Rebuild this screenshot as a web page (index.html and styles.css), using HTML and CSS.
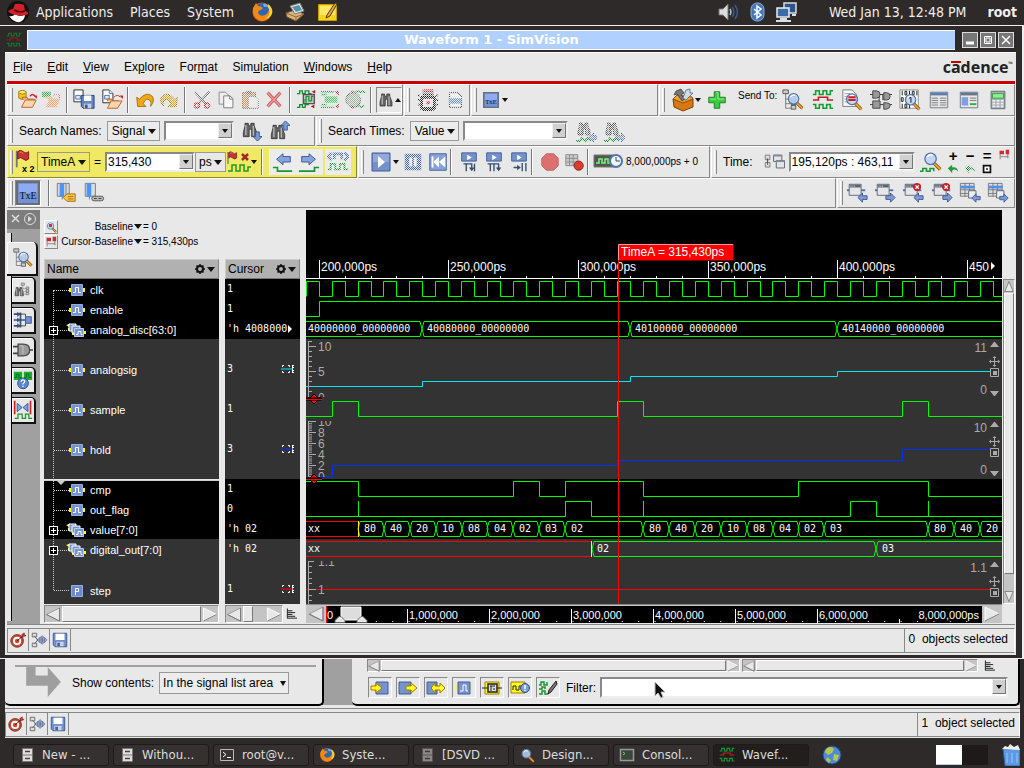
FILE: index.html
```html
<!DOCTYPE html>
<html lang="en">
<head>
<meta charset="utf-8">
<title>Waveform 1 - SimVision</title>
<link rel="stylesheet" href="styles.css">
</head>
<body>
<svg class="sprite" aria-hidden="true">
  <symbol id="open-db" viewBox="0 0 24 24"><path d="M3 3v7q4 3 8 0V3z" fill="#f5c518" stroke="#a57908"/><ellipse cx="7" cy="3.5" rx="4" ry="2" fill="#ffe979" stroke="#a57908"/><path d="M7 11V9h5l1 2h7v3" fill="#f7b27a" stroke="#b5612a"/><path d="M6 20l4-8h12l-4 8z" fill="#fcd5ae" stroke="#b5612a"/><path d="M15 8q3-4 6 0" fill="none" stroke="#c03030" stroke-width="1.4"/><path d="M19 7h4v4z" fill="#c03030"/></symbol>
  <symbol id="open-sig" viewBox="0 0 24 24"><path d="M2 3h10v6H2z" fill="#35b04a"/><path d="M7 11V8h6l1 2h6v3" fill="#f7b27a"/><path d="M6 20l4-9h12l-4 9z" fill="#f9a66a"/><path d="M15 7q3-3 6 0v3" fill="none" stroke="#c03030"/></symbol>
  <symbol id="save-doc" viewBox="0 0 24 24"><path d="M1 1h10v13H1z" fill="#fff" stroke="#222"/><path d="M3 7h5v4H3z" fill="#dbe8ff" stroke="#4c6fae"/><path d="M9 7h14v14H11l-2-2z" fill="#6385c6" stroke="#273f70"/><path d="M12 7h8v6h-8z" fill="#fff"/><path d="M12 16h8v5h-8z" fill="#c9cfdb"/><path d="M13 17h3v4h-3z" fill="#405b91"/></symbol>
  <symbol id="open-doc" viewBox="0 0 24 24"><path d="M2 1h7l4 4v10H2z" fill="#fff" stroke="#222"/><path d="M9 1v4h4M4 7h5v4H4z" fill="#dbe8ff" stroke="#4c6fae"/><path d="M7 13v-2h5l1 2h6v3" fill="#f7b27a" stroke="#b5612a"/><path d="M7 21l4-8h12l-5 8z" fill="#fcd5ae" stroke="#b5612a"/><path d="M14 9q4-4 7 0" fill="none" stroke="#c03030"/><path d="M20 7h4v4z" fill="#c03030"/></symbol>
  <symbol id="undo" viewBox="0 0 24 24"><path d="M3 9l1 10h9l-3-3q3-7 7-4 3 3 1 7 5-6 2-11-6-6-14 3z" fill="#f0a818" stroke="#a56b05"/></symbol>
  <symbol id="redo" viewBox="0 0 24 24"><path d="M21 9l-1 10h-9l3-3q-3-7-7-4-3 3-1 7-5-6-2-11 6-6 14 3z" fill="#f0a818" stroke="#a56b05"/></symbol>
  <symbol id="cut" viewBox="0 0 24 24"><path d="M4 3l12 13M20 3L8 16" stroke="#777" stroke-width="2.500"/><circle cx="6.500" cy="18" r="2.500" fill="none" stroke="#d02c2c" stroke-width="2"/><circle cx="17.500" cy="18" r="2.500" fill="none" stroke="#d02c2c" stroke-width="2"/></symbol>
  <symbol id="copy" viewBox="0 0 24 24"><path d="M4.500 3.500h7l3 3v10h-10z" fill="#eee" stroke="#888"/><path d="M9.500 7.500h7l3 3v10h-10z" fill="#f7f7f7" stroke="#777"/><path d="M16 7.500v3.500h3.500" fill="none" stroke="#777"/></symbol>
  <symbol id="paste" viewBox="0 0 24 24"><path d="M4 4h14v17H4z" fill="#dc9b5c" stroke="#a05a20"/><path d="M8 2h6v4H8z" fill="#777"/><path d="M10 8h7l4 4v9H10z" fill="#eee" stroke="#777"/></symbol>
  <symbol id="delete" viewBox="0 0 24 24"><path d="M5 4l14 15M19 4L5 19" stroke="#b83232" stroke-width="3.500"/><path d="M5 4l14 15M19 4L5 19" stroke="#f27a7a" stroke-width="1.500"/></symbol>
  <symbol id="wave-chip" viewBox="0 0 24 24"><path d="M1 5h3V2h3v3h3V2h4v3h3M1 20h3v-3h3v3h3v-3h4" fill="none" stroke="#168c33" stroke-width="1.500"/><path d="M8 6h12v10H8z" fill="#c9c9c9" stroke="#555" stroke-width="1.500"/><path d="M9 12h2V8h3v5h3V8h2M9 14h3" fill="none" stroke="#1b9a35" stroke-width="1.500"/><path d="M17 3l4 2v-4zM16 19l4 2v-4z" fill="#c01818"/></symbol>
  <symbol id="wave-pass" viewBox="0 0 24 24"><path d="M1 3h14M1 20h14M1 6h6M1 17h6" stroke="#25a03c" stroke-width="1.500"/><path d="M5 8h14v7H5z" fill="#3bd55c"/><path d="M16 3l5 4-1-5M16 19l5-3-1 5" fill="#c02020"/></symbol>
  <symbol id="wave-out" viewBox="0 0 24 24"><ellipse cx="10" cy="12" rx="8" ry="8" fill="#9db79f" stroke="#555"/><path d="M8 1l3 2-3 2zM8 18l3 2-3 2z" fill="#c01818"/><path d="M12 4l3-2 3 2 3-2 2 2M13 20l3-2 3 2 3-2" fill="none" stroke="#168c33" stroke-width="1.500"/></symbol>
  <symbol id="bino" viewBox="0 0 24 24"><path d="M6 4h4v3h3V4h4v3l3 8v5h-6v-9h-3v9H4v-5l2-8z" fill="#666" stroke="#333"/><path d="M7 6v12M16 7v12" stroke="#bbb" stroke-width="1.500"/></symbol>
  <symbol id="gear-wave" viewBox="0 0 24 24"><path d="M6 1h12M6 3h12" stroke="#d02424" stroke-width="1.500"/><path d="M5 9h14v12H5z" fill="none" stroke="#222" stroke-width="3"/><path d="M1 7h2M1 12h2M1 17h2M21 7h2M21 12h2M21 17h2M6 6h12M6 23h12" stroke="#222" stroke-width="2"/><circle cx="12" cy="15" r="2" fill="#e22"/></symbol>
  <symbol id="doc" viewBox="0 0 24 24"><path d="M5 4h9l4 4v12H5z" fill="#fff" stroke="#333"/><path d="M4 10h14v6H4z" fill="#6c8fd0"/></symbol>
  <symbol id="txe" viewBox="0 0 24 24"><path d="M1 1h22v22H1z" fill="#6f92dd" stroke="#6d6d6d" stroke-width="2"/><path d="M3 3h18v9H3z" fill="#8faaf0"/><text x="12" y="18" text-anchor="middle" font-size="10" fill="#111" font-family="Liberation Serif, serif">TxE</text></symbol>
  <symbol id="toolbox" viewBox="0 0 24 24"><path d="M2 11l10 3 10-3v8l-10 4-9-4z" fill="#d77812" stroke="#7b3f06"/><path d="M2 11l4-4 15 2 1 2-10 4z" fill="#efa13c" stroke="#8b4b08"/><path d="M5 3l5-2 3 4-3 2 4 4-3 2-5-7-3 1z" fill="#777" stroke="#333" stroke-width=".7"/><path d="M12 10l3-8 4-1v4h3l-4 4-3 3z" fill="#cfdce8" stroke="#526a80" stroke-width=".8"/></symbol>
  <symbol id="plus" viewBox="0 0 24 24"><path d="M9 3h6v6h6v6h-6v6H9v-6H3V9h6z" fill="#39cc3f" stroke="#177b1d"/><path d="M11 4h2v7h7M4 11h7" fill="none" stroke="#9df09d"/></symbol>
  <symbol id="glass" viewBox="0 0 24 24"><path d="M14 14l8 8" stroke="#8f510b" stroke-width="4"/><path d="M14 14l8 8" stroke="#efa434" stroke-width="2"/><circle cx="11" cy="10" r="6.500" fill="#b9d2f4" fill-opacity=".85" stroke="#5473a8" stroke-width="1.500"/><path d="M7 8q3-4 6-2" fill="none" stroke="#fff" stroke-width="1.500"/></symbol>
  <symbol id="tree" viewBox="0 0 24 24"><path d="M4 4v17h7M4 11h6M4 16h6" fill="none" stroke="#777"/><path d="M1 1h6v4H1zM10 8h5v4h-5zM10 13h5v4h-5zM10 18h5v4h-5z" fill="#ccc" stroke="#555"/></symbol>
  <symbol id="tree-find" viewBox="0 0 24 24"><use href="#tree" width="24" height="24"/><use href="#glass" x="3" y="2" width="21" height="21"/></symbol>
  <symbol id="waves" viewBox="0 0 24 24"><path d="M1 6h3V2h4v4h4V2h4v4h4V2h3M1 17h3v4h4v-4h4v4h4v-4h4v4h3" fill="none" stroke="#159b32" stroke-width="1.700"/><path d="M1 12h6v-3h10v3h6" fill="none" stroke="#c31c25" stroke-width="1.800"/></symbol>
  <symbol id="doc-find" viewBox="0 0 24 24"><path d="M2 1h10l5 5v13H2z" fill="#f8f8f8" stroke="#777"/><path d="M4 5h6M4 8h6M4 11h6M4 14h7" stroke="#999"/><use href="#glass" x="2" y="2" width="22" height="22"/><path d="M8 9h8M8 12h8" stroke="#d01e28" stroke-width="2"/></symbol>
  <symbol id="gates" viewBox="0 0 24 24"><path d="M0 6h24M0 17h24M10 6v12M14 12V6" stroke="#333"/><path d="M3 2h4q4 0 4 4t-4 4H3zM15 4h3q4 0 4 4t-4 4h-3zM3 13h8v8H3zM15 15h3q4 0 4 3t-4 4h-3z" fill="#999" stroke="#444"/></symbol>
  <symbol id="bits" viewBox="0 0 24 24"><path d="M1 1h20v20H1z" fill="#fff" stroke="#888"/><path d="M3.500 2v5M11.500 2v5M19.500 2v5M3.500 16v5M11.500 16v5M7.500 9v5" stroke="#111"/><path d="M6.500 2.500h2v4h-2zM14.500 2.500h2v4h-2zM2.500 9.500h2v4h-2zM6.500 16.500h2v4h-2z" fill="none" stroke="#111"/><use href="#glass" x="3" y="3" width="21" height="21"/><path d="M11 10l2-1v6" fill="none" stroke="#111"/></symbol>
  <symbol id="list" viewBox="0 0 24 24"><path d="M2.500 3.500h19v17h-19z" fill="#e7e7e7" stroke="#6a7486"/><path d="M3 4h18v3H3z" fill="#5e7cae"/><path d="M4 10h7M4 12.500h7M4 15h7M4 17.500h7M13 10h7M13 12.500h7M13 15h7M13 17.500h7" stroke="#777"/></symbol>
  <symbol id="props" viewBox="0 0 24 24"><path d="M2.500 3.500h19v17h-19z" fill="#e7e7e7" stroke="#6a7486"/><path d="M3 4h18v3H3z" fill="#6b7684"/><path d="M4 9h7v9H4z" fill="#7d9fe8"/><path d="M13 10h7M13 12.500h7" stroke="#777"/><path d="M13 16.500h7" stroke="#28b23a" stroke-width="2"/></symbol>
  <symbol id="calc" viewBox="0 0 24 24"><path d="M4.500 2.500h15v19h-15z" fill="#a8b2b8" stroke="#5d676d"/><path d="M6 5h12v5H6z" fill="#8df08d" stroke="#3d9a45"/><path d="M6 13h12M6 16h12M6 19h12" stroke="#eee" stroke-width="2" stroke-dasharray="3 1.500"/></symbol>
  <symbol id="flag" viewBox="0 0 24 24"><path d="M3 3v18" stroke="#777" stroke-width="2"/><path d="M4 4q3-3 6 0t6 0v8q-3 3-6 0t-6 0z" fill="#c33632" stroke="#7b1515"/><path d="M6 5q2-2 4 1" fill="none" stroke="#ef8d80"/></symbol>
  <symbol id="flag-x2" viewBox="0 0 24 24"><use href="#flag" x="0" y="-2" width="24" height="22"/><text x="9" y="22" font-size="9" font-weight="bold" font-family="Liberation Sans, sans-serif">x 2</text></symbol>
  <symbol id="flag-wave" viewBox="0 0 24 24"><use href="#flag" x="-1" y="0" width="16" height="16"/><path d="M1 21h4v-6h4v6h4v-6h4v6h4v-4h3" fill="none" stroke="#1f9a23" stroke-width="1.500"/><path d="M15 4l6 6M21 4l-6 6" stroke="#a82828" stroke-width="2.500"/></symbol>
  <symbol id="arrow-l" viewBox="0 0 24 24"><path d="M5 9l7-6v3h8v6h-8v3z" fill="#87a4dc" stroke="#3a5793"/><path d="M1 18h5v4h16" fill="none" stroke="#189633" stroke-width="1.800"/></symbol>
  <symbol id="arrow-r" viewBox="0 0 24 24"><path d="M19 9l-7-6v3H4v6h8v3z" fill="#87a4dc" stroke="#3a5793"/><path d="M1 22h17v-4h5" fill="none" stroke="#189633" stroke-width="1.800"/></symbol>
  <symbol id="arrows" viewBox="0 0 24 24"><path d="M5 2L1 6l4 4M19 2l4 4-4 4M8 9V3h8v6" fill="none" stroke="#4b70b5" stroke-width="3"/><path d="M1 20h3v-6h5v6h5v-6h5v6h4" fill="none" stroke="#189633" stroke-width="2"/></symbol>
  <symbol id="play" viewBox="0 0 24 24"><path d="M3 3h18v18H3z" fill="#7591cb" stroke="#405c99"/><path d="M4 4h16v8H4z" fill="#91a8d9"/><path d="M9 6l7 6-7 6z" fill="#fff"/></symbol>
  <symbol id="pause" viewBox="0 0 24 24"><path d="M3 3h18v18H3z" fill="#4167b5"/><path d="M8 7h3v10H8zM13 7h3v10h-3z" fill="#fff"/></symbol>
  <symbol id="rewind" viewBox="0 0 24 24"><path d="M3 3h18v18H3z" fill="#8aa2d5" stroke="#405c99"/><path d="M5 6h2v12H5zM13 6v12l-6-6zM20 6v12l-7-6z" fill="#fff"/></symbol>
  <symbol id="step1" viewBox="0 0 24 24"><path d="M4 2h16v9H4z" fill="#7591cb" stroke="#405c99"/><path d="M10 4l5 3-5 3z" fill="#fff"/><path d="M6 14h9v6M9 14v8M18 14v8" fill="none" stroke="#344e72" stroke-width="1.500"/><path d="M12 18h6l-3 4z" fill="#344e72"/></symbol>
  <symbol id="step2" viewBox="0 0 24 24"><path d="M4 2h16v9H4z" fill="#7591cb" stroke="#405c99"/><path d="M10 4l5 3-5 3z" fill="#fff"/><path d="M5 14h12v5M8 14v8M12 14v8" fill="none" stroke="#344e72" stroke-width="1.500"/><path d="M14 18h6l-3 4z" fill="#344e72"/></symbol>
  <symbol id="step3" viewBox="0 0 24 24"><path d="M4 2h16v9H4z" fill="#7591cb" stroke="#405c99"/><path d="M10 4l5 3-5 3z" fill="#fff"/><path d="M6 18h6M15.500 13v9M19.500 13v9" fill="none" stroke="#344e72" stroke-width="1.500"/><path d="M10 15v6l4-3z" fill="#344e72"/></symbol>
  <symbol id="stop" viewBox="0 0 24 24"><path d="M8 3h8l5 5v8l-5 5H8l-5-5V8z" fill="#d84848" stroke="#a83a3a"/></symbol>
  <symbol id="stop-list" viewBox="0 0 24 24"><path d="M2 4h13v12H2z" fill="#ccc" stroke="#888"/><path d="M2 8h13M2 12h13M6 4v12M10 4v12" stroke="#888"/><circle cx="16" cy="16" r="5" fill="#da3d30" stroke="#881b12"/></symbol>
  <symbol id="sim-clock" viewBox="0 0 30 24"><path d="M1 5h20v12H1z" fill="#555" stroke="#777"/><path d="M3 13h3V9h3v4h3V9h3v4h3V9" fill="none" stroke="#6eff6e" stroke-width="1.500"/><circle cx="23" cy="11" r="6" fill="#eef6ff" stroke="#5275ae" stroke-width="2"/><path d="M23 7v4h4" fill="none" stroke="#444"/></symbol>
  <symbol id="link" viewBox="0 0 24 24"><path d="M2.500 4.500h5v5h-5zM2.500 12.500h5v5h-5z" fill="#ddd" stroke="#777"/><path d="M5 8v7" stroke="#444"/><path d="M11.500 4.500h9v7h-9zM14.500 10.500h9v8h-9z" fill="#e4e4e4" stroke="#596477"/><path d="M11 5h10M14 11h10" stroke="#7d8ba0" stroke-width="2"/></symbol>
  <symbol id="zoom-wave" viewBox="0 0 24 24"><use href="#glass" x="1" y="-1" width="23" height="23"/><path d="M0 22h3v-3h4v3h4v-3h4v3" fill="none" stroke="#189633" stroke-width="1.700"/></symbol>
  <symbol id="cursors" viewBox="0 0 14 14"><path d="M2.500 2v10M11.500 1v10M3 9h9" stroke="#777"/><path d="M2 2h5v4H2zM9 1h4v5H9z" fill="#c82e32"/></symbol>
  <symbol id="hook" viewBox="0 0 14 14"><path d="M1 6l5-4v3q6-1 7 5-4-4-7-1v3z" fill="#279a3b"/></symbol>
  <symbol id="win" viewBox="0 0 24 24"><path d="M1 9h20" stroke="#53709e" stroke-width="2"/><path d="M3.500 2.500h13v12h-13z" fill="#e7e7e7" stroke="#59647a"/><path d="M4 3h12v3H4z" fill="#58637b"/><path d="M5 4.500h5" stroke="#fff" stroke-dasharray="1 1"/></symbol>
  <symbol id="blue-l" viewBox="0 0 12 12"><path d="M1 6l5-5v3h5v4H6v3z" fill="#7d9ad2" stroke="#3a5793"/></symbol>
  <symbol id="blue-r" viewBox="0 0 12 12"><path d="M11 6L6 1v3H1v4h5v3z" fill="#7d9ad2" stroke="#3a5793"/></symbol>
  <symbol id="blue-u" viewBox="0 0 12 12"><path d="M6 1l5 5H8v5H4V6H1z" fill="#7d9ad2" stroke="#3a5793"/></symbol>
  <symbol id="blue-d" viewBox="0 0 12 12"><path d="M6 11L1 6h3V1h4v5h3z" fill="#7d9ad2" stroke="#3a5793"/></symbol>
  <symbol id="badge-x" viewBox="0 0 10 10"><circle cx="5" cy="5" r="5" fill="#c8232b"/><path d="M3 3l4 4M7 3L3 7" stroke="#fff" stroke-width="1.500"/></symbol>
  <symbol id="grid" viewBox="0 0 24 24"><path d="M1.500 1.500h15v14h-15z" fill="#ddd" stroke="#777"/><path d="M1 8.500h16M1 12.500h16M6.500 1v15M11.500 1v15" stroke="#777"/><path d="M2 4h15v3H2z" fill="#4a90ee"/><path d="M10.500 9.500h8v8h-8z" fill="#eee" stroke="#59647a"/></symbol>
  <symbol id="cols-tag" viewBox="0 0 24 24"><path d="M2.500 1.500h13v14h-13z" fill="#ddd" stroke="#777"/><path d="M5 2h5v14H5z" fill="#4796ff"/><path d="M8 16v3M12 2v14" stroke="#777"/><path d="M9 17l4-4h9v8h-9z" fill="#ffc842" stroke="#9b6811"/><path d="M14 16h6M14 18.500h6" stroke="#9b6811"/></symbol>
  <symbol id="cols-link" viewBox="0 0 24 24"><path d="M2.500 1.500h11v14h-11z" fill="#ddd" stroke="#777"/><path d="M4 2h5v14H4z" fill="#4796ff"/><path d="M7 16v3" stroke="#777"/><rect x="9.500" y="15.500" width="13" height="5" rx="2.500" fill="#bbb" stroke="#555"/><path d="M12 18h3M17 18h3" stroke="#333"/></symbol>
  <symbol id="target" viewBox="0 0 20 20"><circle cx="9" cy="11" r="7" fill="#c84a36" stroke="#7b2a1c"/><circle cx="9" cy="11" r="4.500" fill="#fff"/><circle cx="9" cy="11" r="2.500" fill="#c84a36"/><path d="M9 11l7-6" stroke="#222"/><path d="M14 4l3-2v2l2 1-4 2z" fill="#c0392b" stroke="#6b1a10" stroke-width=".5"/></symbol>
  <symbol id="nodes" viewBox="0 0 20 20"><path d="M2.500 2.500h5v4h-5zM2.500 13.500h5v4h-5z" fill="#ddd" stroke="#666"/><path d="M5 6l4 4-4 4M7 10h11M13.500 6v8" fill="none" stroke="#555"/><path d="M13.500 5l3 3h-6zM13.500 15l3-3h-6zM19 10l-3-3v6zM8 10l3-3v6z" fill="#8ea5d2" stroke="#4a639b" stroke-width=".6"/></symbol>
  <symbol id="disk" viewBox="0 0 20 20"><path d="M2.500 2.500h15v15h-13l-2-2z" fill="#6f8fd0" stroke="#3b5590"/><path d="M5 3h10v7H5z" fill="#fff"/><path d="M6 12h8v5H6z" fill="#cdd3df"/><path d="M7 13h3v4H7z" fill="#4b64a0"/></symbol>
  <symbol id="sig" viewBox="0 0 16 14"><path d="M0 5h2v4H0zM14 5h2v4h-2z" fill="#ff0"/><path d="M2.500 1.500h11v11h-11z" fill="#7692cf" stroke="#93aee6"/><path d="M4 9.500h2.500v-5h3v5H12" fill="none" stroke="#fff"/></symbol>
  <symbol id="bus" viewBox="0 0 20 14"><path d="M0 2l3-1v3zM2 5h2v3H2zM6 9h2v3H6zM18 8h2v3h-2z" fill="#ff0"/><path d="M3 1h7v7H3z" fill="#7692cf" stroke="#fff"/><path d="M6 3h8v7H6z" fill="#7692cf" stroke="#fff"/><path d="M8.500 5.500h9v8h-9z" fill="#7692cf" stroke="#b9caee"/><path d="M10 11.500h2v-3h3v3h1.500" fill="none" stroke="#fff"/></symbol>
  <symbol id="param" viewBox="0 0 16 14"><path d="M2.500 1.500h11v11h-11z" fill="#6d8bcb" stroke="#93aee6"/><path d="M6.500 11V4.500h3v3h-3" fill="none" stroke="#fff"/></symbol>
  <symbol id="gear" viewBox="0 0 10 10"><circle cx="5" cy="5" r="3" fill="none" stroke="#111" stroke-width="2"/><path d="M5 0v2M5 8v2M0 5h2M8 5h2M1.500 1.500l1.500 1.500M7 7l1.500 1.500M8.500 1.500L7 3M3 7L1.500 8.500" stroke="#111" stroke-width="1.500"/></symbol>
  <symbol id="range" viewBox="0 0 14 10"><path d="M3 1.500H1.500V3M1.500 7v1.500H3M7 1.500h1.500V3M8.500 7v1.500H7M11.500 1v8M12 1.500h1M12 3.500h1M12 6.500h1M12 8.500h1" fill="none" stroke="#fff"/><path d="M0 5h12" stroke="currentColor"/></symbol>
  <symbol id="align" viewBox="0 0 12 12"><path d="M1.500 0v11M2 2.500h5M2 4.500h8M2 6.500h5M2 8.500h8M2 10.500h10" stroke="#111"/></symbol>
  <symbol id="sb-l" viewBox="0 0 16 16"><path d="M15 1L1 8l14 7z" fill="#e8e8e8" stroke="#999"/><path d="M15 1v14L1 8" fill="none" stroke="#777"/></symbol>
  <symbol id="sb-r" viewBox="0 0 16 16"><path d="M1 1l14 7-14 7z" fill="#e8e8e8" stroke="#fff"/><path d="M1 15l14-7" fill="none" stroke="#777"/></symbol>
  <symbol id="cabinet" viewBox="0 0 16 16"><path d="M3.500 1.500h10v13h-10z" fill="#dedede" stroke="#777"/><path d="M4 8h9" stroke="#777"/><path d="M6 4.500h5M6 11.500h5" stroke="#444" stroke-width="1.500"/></symbol>
  <symbol id="term" viewBox="0 0 16 16"><path d="M1.500 2.500h13v11h-13z" fill="#343434" stroke="#bbb"/><path d="M4 5l3 2.500L4 10M8 10.500h4" fill="none" stroke="#fff"/></symbol>
  <symbol id="term-g" viewBox="0 0 16 16"><path d="M1.500 2.500h13v11h-13z" fill="#3a463a" stroke="#999" stroke-width="1.500"/><path d="M4 5l2 1.500L4 8" fill="none" stroke="#6fd66f"/></symbol>
  <symbol id="firefox" viewBox="0 0 22 22"><circle cx="11" cy="11" r="9.500" fill="#e66000"/><circle cx="11.500" cy="9" r="7" fill="#2e66b4"/><path d="M12 3q5-1 6 4-2-2-5-1z" fill="#68b1ef"/><path d="M2 7q2-3 3-5l2 3q3 0 5 2l-2 2q-3 0-3 3 2 4 7 2 5-3 4-9 5 7 0 12-7 6-13 0-4-4-3-10z" fill="#f08a12"/><path d="M17 6q4 8-3 12 9-2 7-10-1-3-4-5z" fill="#ffd23c"/></symbol>
  <symbol id="globe" viewBox="0 0 20 20"><circle cx="10" cy="10" r="9" fill="#4a8ad8" stroke="#224a80"/><path d="M4 4q5-4 8 0l-2 4-4 2-3-3zM12 9l5 1-2 6-4-1zM5 12l4 3-2 3-3-3z" fill="#b9c64a"/></symbol>
</svg>

<header class="panel">
  <nav class="panel-menu" aria-label="Desktop">
    <svg class="i24" viewBox="0 0 24 24"><circle cx="12" cy="12" r="11" fill="#111"/><path d="M3 16q4 1 6-2 6 4 10 0 0 6-5 8-6 1-11-6z" fill="#fff"/><path d="M2 11q3-2 5-2l2-5q5-1 9 1l1 6q4 1 3 3-5 3-12 1-6-1-8-4z" fill="#d62027"/><path d="M8 10q5 3 11 1" fill="none" stroke="#500" stroke-width="1.500"/></svg>
    <a href="#">Applications</a><a href="#">Places</a><a href="#">System</a>
    <svg class="i22 launch"><use href="#firefox"/></svg>
    <svg class="i22 launch" viewBox="0 0 22 22"><path d="M2 12l9-3 9 4-8 7-9-4z" fill="#d9b27c" stroke="#7d5a2b"/><path d="M2 12l10 4 8-3M12 16v4" fill="none" stroke="#8d6a38"/><path d="M6 5l10-3 4 8-9 3z" fill="#e5e5e5" stroke="#777"/><path d="M8 6l7-2 3 5-6 2z" fill="#4e94ad"/></svg>
    <svg class="i22 launch" viewBox="0 0 22 22"><path d="M1.500 3.500h18v16h-18z" fill="#f7d31e" stroke="#c89c0a"/><path d="M3 5h15v9H3z" fill="#fbe868"/><path d="M10 14l8-12 2 1-7 12-4 2z" fill="#e7a44c" stroke="#543814"/></svg>
  </nav>
  <div class="tray">
    <svg class="i22" viewBox="0 0 22 22"><path d="M2 8h4l5-5v16l-5-5H2z" fill="#ddd" stroke="#777"/><path d="M13 8q2 3 0 6" fill="none" stroke="#bbb" stroke-width="1.500"/><path d="M15 6q4 5 0 10M18 4q5 7 0 14" fill="none" stroke="#385b8e" stroke-width="1.500"/></svg>
    <svg class="i22" viewBox="0 0 22 22"><rect x="5" y="2" width="13" height="18" rx="6" fill="#4877b8" stroke="#8baad4"/><path d="M8 8l7 6-4 3V5l4 3-7 6" fill="none" stroke="#fff" stroke-width="1.500"/></svg>
    <svg class="i22" viewBox="0 0 22 22"><path d="M9 2h12v10H9z" fill="#2d548f" stroke="#ddd" stroke-width="1.500"/><path d="M2 7h12v9H2z" fill="#3f6aa8" stroke="#eee" stroke-width="1.500"/><path d="M1 20h15M5 18h7M17 14h4" stroke="#ddd" stroke-width="2"/></svg>
    <time>Wed Jan 13, 12:48 PM</time><strong>root</strong>
  </div>
</header>

<section class="window">
  <div class="titlebar">
    <svg class="i16 app"><use href="#waves"/></svg>
    <h1>Waveform 1 - SimVision</h1>
    <div class="wbtns"><button aria-label="Minimize"><svg viewBox="0 0 14 14"><path d="M3 10h8" stroke="#fff" stroke-width="3"/></svg></button><button aria-label="Maximize"><svg viewBox="0 0 14 14"><path d="M3.500 3.500h7v7h-7z" fill="none" stroke="#fff"/><path d="M5 5h4v4H5z" fill="none" stroke="#fff"/></svg></button><button aria-label="Close"><svg viewBox="0 0 14 14"><path d="M3 3l8 8M11 3l-8 8" stroke="#fff" stroke-width="1.500"/></svg></button></div>
  </div>
  <div class="client">
    <nav class="menubar" aria-label="Main">
      <a href="#"><u>F</u>ile</a><a href="#"><u>E</u>dit</a><a href="#"><u>V</u>iew</a><a href="#">Ex<u>p</u>lore</a><a href="#">For<u>m</u>at</a><a href="#">Sim<u>u</u>lation</a><a href="#"><u>W</u>indows</a><a href="#"><u>H</u>elp</a>
      <span class="brand">c<span class="macron">a</span>dence<sup>™</sup></span>
    </nav>

    <div class="bars">
      <div class="bar">
        <div class="group g1">
          <i class="grip"></i>
          <button aria-label="Open database"><svg><use href="#open-db"/></svg></button><button class="off" aria-label="Reload"><svg><use href="#open-sig"/></svg></button>
          <i class="sep"></i>
          <button class="mr" aria-label="Save"><svg><use href="#save-doc"/></svg></button><button aria-label="Open"><svg><use href="#open-doc"/></svg></button>
          <i class="sep"></i>
          <button aria-label="Undo"><svg><use href="#undo"/></svg></button><button class="off" aria-label="Redo"><svg><use href="#redo"/></svg></button>
          <i class="sep"></i>
          <button class="off" aria-label="Cut"><svg><use href="#cut"/></svg></button><button aria-label="Copy"><svg><use href="#copy"/></svg></button><button class="off" aria-label="Paste"><svg><use href="#paste"/></svg></button><button class="off dense" aria-label="Delete"><svg><use href="#delete"/></svg></button>
          <i class="sep"></i>
          <button aria-label="Probe"><svg><use href="#wave-chip"/></svg></button><button class="off" aria-label="Pass"><svg><use href="#wave-pass"/></svg></button><button class="off" aria-label="Export"><svg><use href="#wave-out"/></svg></button>
          <i class="sep"></i>
          <button class="pressed" aria-label="Find"><svg><use href="#bino"/></svg><b class="up"></b></button>
        </div>
        <div class="group g2"><i class="grip"></i><button class="off" aria-label="Gear"><svg><use href="#gear-wave"/></svg></button><button class="off" aria-label="Document"><svg><use href="#doc"/></svg></button></div>
        <div class="group g3"><i class="grip"></i><button class="tx" aria-label="Text"><svg class="s16"><use href="#txe"/></svg><b class="dn"></b></button></div>
        <div class="group g4">
          <i class="grip"></i>
          <button class="tools" aria-label="Tools"><svg><use href="#toolbox"/></svg><b class="dn"></b></button><button aria-label="Add"><svg><use href="#plus"/></svg></button>
          <span class="send">Send To:</span>
          <div class="spread"><button aria-label="Design browser"><svg><use href="#tree-find"/></svg></button><button aria-label="Waveform"><svg><use href="#waves"/></svg></button><button aria-label="Source"><svg><use href="#doc-find"/></svg></button><button aria-label="Schematic"><svg><use href="#gates"/></svg></button><button aria-label="Memory"><svg><use href="#bits"/></svg></button><button aria-label="Register"><svg><use href="#list"/></svg></button><button aria-label="Properties"><svg><use href="#props"/></svg></button><button aria-label="Calculator"><svg><use href="#calc"/></svg></button></div>
        </div>
      </div>

      <div class="bar low">
        <div class="group h1">
          <i class="grip"></i><label for="sn">Search Names:</label>
          <span class="pick"><select id="sn"><option>Signal</option></select></span>
          <span class="combo w68"><input aria-label="Name"><button aria-label="Names list"><b class="dn"></b></button></span>
          <button aria-label="Find next"><svg><use href="#bino" width="20" height="20"/><use href="#blue-d" x="12" y="11" width="11" height="11"/></svg></button><button aria-label="Find previous"><svg><use href="#bino" y="2" width="20" height="20"/><use href="#blue-u" x="12" y="0" width="11" height="11"/></svg></button>
        </div>
        <div class="group grow">
          <i class="grip"></i><label for="st">Search Times:</label>
          <span class="pick"><select id="st"><option>Value</option></select></span>
          <span class="combo w104"><input aria-label="Time value"><button aria-label="Times list"><b class="dn"></b></button></span>
          <button class="off" aria-label="Previous time"><svg><use href="#bino" width="18" height="18"/><path d="M1 21h4l2-3 3 3 3-3 3 3" fill="none" stroke="#189633" stroke-width="2"/><use href="#blue-l" x="13" y="12" width="11" height="11"/></svg></button><button class="off" aria-label="Next time"><svg><use href="#bino" width="18" height="18"/><path d="M1 21h4l2-3 3 3 3-3 3 3" fill="none" stroke="#189633" stroke-width="2"/><use href="#blue-r" x="13" y="12" width="11" height="11"/></svg></button>
        </div>
      </div>

      <div class="bar">
        <div class="group yellow">
          <i class="grip"></i><svg class="i24"><use href="#flag-x2"/></svg>
          <span class="pick"><select aria-label="Cursor"><option>TimeA</option></select></span><span class="eq">=</span>
          <span class="combo w90"><input aria-label="Cursor time" value="315,430"><button aria-label="Time list"><b class="dn"></b></button></span>
          <span class="pick"><select aria-label="Unit"><option>ps</option></select></span>
          <button class="tools" aria-label="Markers"><svg><use href="#flag-wave"/></svg><b class="dn"></b></button>
          <i class="sep"></i>
          <span class="pale"><button aria-label="Previous edge"><svg><use href="#arrow-l"/></svg></button><button aria-label="Next edge"><svg><use href="#arrow-r"/></svg></button></span><span class="pale"><button class="off" aria-label="Expand"><svg><use href="#arrows"/></svg></button></span>
        </div>
        <div class="group r2">
          <i class="grip"></i>
          <button class="tools" aria-label="Run"><svg><use href="#play"/></svg><b class="dn"></b></button><button class="off" aria-label="Pause"><svg><use href="#pause"/></svg></button><button aria-label="Reset"><svg><use href="#rewind"/></svg></button>
          <i class="sep"></i>
          <button aria-label="Step"><svg><use href="#step1"/></svg></button><button aria-label="Next"><svg><use href="#step2"/></svg></button><button aria-label="Return"><svg><use href="#step3"/></svg></button>
          <i class="sep"></i>
          <button class="off dense" aria-label="Stop"><svg><use href="#stop"/></svg></button><button aria-label="Breakpoints"><svg><use href="#stop-list"/></svg></button>
          <i class="sep"></i>
          <svg class="clock"><use href="#sim-clock"/></svg><span class="small">8,000,000ps + 0</span>
        </div>
        <div class="group grow">
          <i class="grip"></i><label for="tr">Time:</label>
          <button class="lk" aria-label="Link"><svg><use href="#link"/></svg></button>
          <span class="combo w126"><input id="tr" value="195,120ps : 463,11"><button aria-label="Range list"><b class="dn"></b></button></span>
          <button aria-label="Zoom"><svg><use href="#zoom-wave"/></svg></button>
          <div class="mini"><button>+</button><button>−</button><button>=</button><button aria-label="Cursors"><svg><use href="#cursors"/></svg></button><button aria-label="Back"><svg><use href="#hook"/></svg></button><button class="off" aria-label="Forward"><svg><use href="#hook"/></svg></button><button aria-label="Fit"><svg viewBox="0 0 14 14"><path d="M3 3h8v8H3z" fill="#fff" stroke="#111" stroke-width="2"/><path d="M6 6h2v2H6z"/></svg></button></div>
        </div>
      </div>

      <div class="bar low">
        <div class="group grow">
          <i class="grip"></i><button class="pressed sq" aria-label="Text mode"><svg><use href="#txe"/></svg></button><i class="sep"></i>
          <button class="mr" aria-label="Tag columns"><svg><use href="#cols-tag"/></svg></button><button aria-label="Link columns"><svg><use href="#cols-link"/></svg></button>
        </div>
        <div class="group g6">
          <i class="grip"></i>
          <div class="spread"><button aria-label="Window back"><svg viewBox="0 0 24 24"><use href="#win" width="24" height="24"/><use href="#blue-l" x="12" y="11" width="12" height="12"/></svg></button><button aria-label="Window forward"><svg viewBox="0 0 24 24"><use href="#win" width="24" height="24"/><use href="#blue-r" x="12" y="11" width="12" height="12"/></svg></button><button aria-label="Close back"><svg viewBox="0 0 24 24"><use href="#win" width="24" height="24"/><use href="#badge-x" x="12" y="1" width="9" height="9"/><use href="#blue-l" x="12" y="11" width="12" height="12"/></svg></button><button aria-label="Close forward"><svg viewBox="0 0 24 24"><use href="#win" width="24" height="24"/><use href="#badge-x" x="12" y="1" width="9" height="9"/><use href="#blue-r" x="12" y="11" width="12" height="12"/></svg></button><button aria-label="Grid back"><svg viewBox="0 0 24 24"><use href="#grid" width="24" height="24"/><use href="#blue-l" x="13" y="12" width="11" height="11"/></svg></button><button aria-label="Grid forward"><svg viewBox="0 0 24 24"><use href="#grid" width="24" height="24"/><use href="#blue-r" x="13" y="12" width="11" height="11"/></svg></button></div>
        </div>
      </div>
    </div>

    <main class="work">
      <aside class="side">
        <div class="side-top"><svg viewBox="0 0 30 18"><path d="M5 5l7 7M12 5l-7 7" stroke="#ddd" stroke-width="1.500"/><circle cx="23" cy="9" r="5.500" fill="none" stroke="#ddd"/><path d="M21 6v6l4-3z" fill="#ddd"/></svg></div>
        <div class="tabs">
          <button class="on" aria-label="Design"><svg><use href="#tree-find"/></svg></button>
          <button aria-label="Search"><svg viewBox="0 0 24 24"><use href="#bino" y="5" width="15" height="18"/><use href="#tree" x="9" width="16" height="22"/></svg></button>
          <button aria-label="Drivers"><svg viewBox="0 0 24 24"><path d="M1 5h8M1 12h14M1 19h8M9 3v18" stroke="#345282" stroke-width="2"/><path d="M5 2l4 3-4 3zM5 9l4 3-4 3zM5 16l4 3-4 3z" fill="#345282"/><path d="M9 5h6v5M9 19h6v-5" fill="none" stroke="#333"/><path d="M15 8h7v8h-7z" fill="#6f91cd" stroke="#3a5793"/></svg></button>
          <button aria-label="Gate"><svg viewBox="0 0 24 24"><path d="M0 8h7M0 16h7M19 12h5" stroke="#444" stroke-width="2"/><path d="M6 5h6q8 0 8 7t-8 7H6z" fill="#999" stroke="#444" stroke-width="1.500"/><path d="M8 7h4v10" fill="none" stroke="#ccc"/></svg></button>
          <button aria-label="Compare"><svg viewBox="0 0 24 24"><path d="M1 2h10v10H1zM13 2h10v10H13z" fill="#21a82b"/><path d="M2 9h2V5h3v4h3M14 9h2V5h3v4h3" fill="none" stroke="#063"/><circle cx="12" cy="16" r="6.500" fill="#5d86d0" stroke="#27498a"/><path d="M9.500 14q1-2.500 3-2 2.500 1 1 3-1.500 1-1.500 2.500M12 19v1.500" fill="none" stroke="#fff" stroke-width="1.500"/></svg></button>
          <button aria-label="Measure"><svg viewBox="0 0 24 24"><path d="M2 1v16M21 1v16" stroke="#c22" stroke-width="2"/><path d="M11 9L5 4v10zM12 9l6-5v10z" fill="#7ca0e0" stroke="#345282"/><path d="M2 22h4v-5h5v5h4v-5h4v5h4" fill="none" stroke="#1a9a2a" stroke-width="1.500"/></svg></button>
        </div>
      </aside>

      <div class="lists">
        <div class="info">
          <button class="ib" aria-label="Baseline zoom"><svg viewBox="0 0 24 24"><use href="#glass" width="24" height="24"/><path d="M8 6h6v6H8z" fill="#c33632"/></svg></button><span class="rt">Baseline</span><b class="dn"></b><span>= 0</span>
          <button class="ib" aria-label="Baseline cursors"><svg><use href="#cursors"/></svg></button><span class="rt">Cursor-Baseline</span><b class="dn"></b><span>= 315,430ps</span>
        </div>
        <div class="cols">
          <div class="col names">
            <div class="head"><span>Name</span><svg><use href="#gear"/></svg><b class="dn"></b></div>
            <ul>
              <li><i class="stem"></i><svg><use href="#sig"/></svg>clk</li>
              <li><i class="stem"></i><svg><use href="#sig"/></svg>enable</li>
              <li class="ex"><button aria-label="Expand analog_disc"></button><i class="stem"></i><svg><use href="#bus"/></svg>analog_disc[63:0]</li>
              <li class="tall"><i class="stem"></i><svg><use href="#sig"/></svg>analogsig</li>
              <li class="gr"><i class="stem"></i><svg><use href="#sig"/></svg>sample</li>
              <li class="tall"><i class="stem"></i><svg><use href="#sig"/></svg>hold</li>
              <li class="ins"><i class="stem"></i><svg><use href="#sig"/></svg>cmp</li>
              <li><i class="stem"></i><svg><use href="#sig"/></svg>out_flag</li>
              <li class="ex"><button aria-label="Expand value"></button><i class="stem"></i><svg><use href="#bus"/></svg>value[7:0]</li>
              <li class="ex gr"><button aria-label="Expand digital_out"></button><i class="stem"></i><svg><use href="#bus"/></svg>digital_out[7:0]</li>
              <li class="last"><i class="stem"></i><svg><use href="#param"/></svg>step</li>
            </ul>
            <div class="hscroll"><svg><use href="#sb-l"/></svg><i class="thumb"></i><svg><use href="#sb-r"/></svg></div>
          </div>
          <div class="col values">
            <div class="head"><span>Cursor</span><svg><use href="#gear"/></svg><b class="dn"></b></div>
            <ul>
              <li>1</li><li>1</li><li>'h 4008000<i class="more"></i></li>
              <li class="tall">3<svg class="cy"><use href="#range"/></svg></li>
              <li class="gr">1</li>
              <li class="tall">3<svg class="bl"><use href="#range"/></svg></li>
              <li>1</li><li>0</li><li>'h 02</li><li class="gr">'h 02</li>
              <li class="last">1<svg class="rd"><use href="#range"/></svg></li>
            </ul>
            <div class="hrow"><div class="hscroll"><svg><use href="#sb-l"/></svg><i class="thumb nub"></i><i class="void"></i><svg><use href="#sb-r"/></svg></div><svg class="al"><use href="#align"/></svg></div>
          </div>
        </div>
      </div>

      <div class="waves">
        <svg class="plot" role="img" aria-label="Waveforms">
          <defs>
            <path id="cell" d="M0 8l2-7.500h22l2 7.500-2 7.500H2z"/>
            <path id="clk8" d="M0 86.500v-15h13v15h13v-15h13v15h13v-15h13v15h13v-15h13v15h13v-15h13v15h13v-15h13v15h13v-15h13v15h13v-15h13v15h13"/>
            <g id="ctl" fill="#aaa"><path d="M-12 7h9l-4-5h-1zM-12 51h9l-4 5h-1z"/><path d="M-7.500 17v9M-12 21.500h9" stroke="#aaa"/><path d="M-7.500 16l2 2h-4zM-7.500 27l2-2h-4zM-13 21.500l2-2v4zM-2 21.500l-2-2v4z"/><path d="M-11.500 28.500h8v8h-8z" fill="#333" stroke="#aaa"/><path d="M-9 31h4v4h-4z"/></g>
            <g id="knob"><path d="M8-5l4 4v2l-4 4-4-4v-2z" fill="red" stroke="#000"/><path d="M0-1.500h16v3H0z" fill="#000"/><path d="M0 .5h16" stroke="red"/></g>
            <clipPath id="c1"><path d="M0 129h60v58H0z"/></clipPath><clipPath id="c2"><path d="M0 211h60v56H0z"/></clipPath><clipPath id="c3"><path d="M0 351h60v50H0z"/></clipPath>
          </defs>
          <rect y="129" width="100%" height="140" fill="#333"/><rect y="329" width="100%" height="65" fill="#333"/>
          <g stroke="#fff"><path d="M13.500 50v18M142.500 50v18M272.500 50v18M402.500 50v18M531.500 50v18M661.500 50v18M39.500 66v2M65.500 66v2M90.500 66v2M116.500 66v2M168.500 66v2M194.500 66v2M220.500 66v2M246.500 66v2M298.500 66v2M324.500 66v2M350.500 66v2M376.500 66v2M428.500 66v2M454.500 66v2M479.500 66v2M505.500 66v2M557.500 66v2M583.500 66v2M609.500 66v2M635.500 66v2M687.500 66v2"/></g>
          <rect y="68" width="100%" height="1" fill="#fff"/>
          <g class="rule" fill="#fff"><text x="15" y="61">200,000ps</text><text x="144" y="61">250,000ps</text><text x="274" y="61">300,000ps</text><text x="404" y="61">350,000ps</text><text x="533" y="61">400,000ps</text><text x="663" y="61">450</text><path d="M685 52l4 4-4 4z"/></g>
          <g class="green">
            <path d="M.5 86.500v-15h13v15h13v-15h13v15h13v-15h13v15h12"/>
            <use href="#clk8" x="77.500"/>
            <path d="M285.500 86.500v-15h13v15h13v-15h13v15h13v-15h13v15h13v-15h13v15h13v-15h13v15h13v-15h13v15h13v-15h13v15h12"/>
            <use href="#clk8" x="466.500"/>
            <path d="M674.500 86.500v-15h13v15h26"/>
            <path d="M0 106.500h13.500v-15H3000"/>
            <path d="M0 111.500h114l2 7.500-2 7.500H0M116 119l2-7.500h204l2 7.500-2 7.500H118zM324 119l2-7.500h203l2 7.500-2 7.500H326zM3000 111.500H533l-2 7.500 2 7.500h2467"/>
            <path d="M0 206.500h26.500v-15h26v15h259v-15h26v15h259v-15h26v15H3000"/>
            <path d="M0 271.500h52.500v15h155v-15h26v15h26v-15h78v15h155v-15h130v15H3000"/>
            <path d="M0 306.500h259.500v-15h26v15h259v-15h26v15H3000M52.500 291v15M337.500 291v15M622.500 291v15"/>
            <g transform="translate(0 311)"><use href="#cell" x="52"/><use href="#cell" x="78"/><use href="#cell" x="104"/><use href="#cell" x="130"/><use href="#cell" x="156"/><use href="#cell" x="181"/><use href="#cell" x="207"/><use href="#cell" x="233"/><path d="M259 8l2-7.500h74l2 7.500-2 7.500h-74z"/><use href="#cell" x="337"/><use href="#cell" x="363"/><use href="#cell" x="389"/><use href="#cell" x="415"/><use href="#cell" x="441"/><use href="#cell" x="467"/><use href="#cell" x="492"/><path d="M518 8l2-7.500h100l2 7.500-2 7.500H520z"/><use href="#cell" x="622"/><use href="#cell" x="648"/><use href="#cell" x="674"/></g>
            <path d="M286 339l2-7.500h280l2 7.500-2 7.500H288zM3000 331.500H572l-2 7.500 2 7.500h2428"/>
          </g>
          <path d="M0 311.500h52M0 326.500h52M0 331.500h286M0 346.500h286M0 379.500h684" stroke="red" fill="none"/><path d="M52.500 311v16M285.500 331v16" stroke="#ff0"/>
          <path d="M0 176.500h116.500v-5h208v-5h207v-5H684" fill="none" stroke="#00e5ff"/>
          <path d="M0 266.500h26.500v-11h285v-5h285v-11H684" fill="none" stroke="#0030ff"/>
          <g class="bits" fill="#fff"><text x="2" y="122">40000000_00000000</text><text x="121" y="122">40080000_00000000</text><text x="329" y="122">40100000_00000000</text><text x="536" y="122">40140000_00000000</text>
            <text x="2" y="322">xx</text><text x="58" y="322">80</text><text x="84" y="322">40</text><text x="110" y="322">20</text><text x="136" y="322">10</text><text x="162" y="322">08</text><text x="188" y="322">04</text><text x="213" y="322">02</text><text x="239" y="322">03</text><text x="265" y="322">02</text><text x="343" y="322">80</text><text x="369" y="322">40</text><text x="395" y="322">20</text><text x="421" y="322">10</text><text x="447" y="322">08</text><text x="473" y="322">04</text><text x="498" y="322">02</text><text x="524" y="322">03</text><text x="628" y="322">80</text><text x="654" y="322">40</text><text x="680" y="322">20</text>
            <text x="2" y="342">xx</text><text x="291" y="342">02</text><text x="576" y="342">03</text></g>
          <g stroke="#aaa" fill="none"><path d="M2.500 131v56M3 131.500h3M3 136.500h7M3 141.500h3M3 146.500h3M3 151.500h3M3 156.500h3M3 161.500h7M3 166.500h3M3 171.500h3M3 176.500h3M3 181.500h3"/><path d="M2.500 211v56M3 211.500h7M3 222.500h7M3 233.500h7M3 244.500h7M3 255.500h7"/><path d="M4.500 211v56" stroke-width="3" stroke-dasharray="1 1.200"/><path d="M2.500 351v43M3 351.500h5M3 356.500h3M3 362.500h3M3 368.500h3M3 373.500h3M3 379.500h7M3 385.500h3M3 390.500h3"/></g>
          <g class="rule" fill="#aaa"><g clip-path="url(#c1)"><text x="12" y="141">10</text><text x="12" y="166">5</text><text x="12" y="192">0</text></g><g clip-path="url(#c2)"><text x="12" y="216">10</text><text x="12" y="227">8</text><text x="12" y="238">6</text><text x="12" y="249">4</text><text x="12" y="260">2</text><text x="12" y="271">0</text></g><g clip-path="url(#c3)"><text x="12" y="356">1.1</text><text x="12" y="384">1</text></g></g>
          <use href="#knob" y="189"/><use href="#knob" y="269"/>
          <path d="M312.500 50v344" stroke="red"/>
          <svg x="100%" y="130" overflow="visible"><use href="#ctl"/><g class="rule" fill="#aaa" text-anchor="end"><text x="-15" y="12">11</text><text x="-15" y="54">0</text></g></svg>
          <svg x="100%" y="210" overflow="visible"><use href="#ctl"/><g class="rule" fill="#aaa" text-anchor="end"><text x="-15" y="12">10</text><text x="-15" y="54">0</text></g></svg>
          <svg x="100%" y="350" overflow="visible"><use href="#ctl"/><text class="rule" fill="#aaa" text-anchor="end" x="-15" y="12">1.1</text></svg>
          <path d="M312 34h115v16H312z" fill="red"/><path d="M312.500 50V34.500H427" fill="none" stroke="#f99"/><path d="M427.500 34v16.500H313" fill="none" stroke="#700"/>
          <text class="rule" fill="#fff" x="315" y="46">TimeA = 315,430ps</text>
        </svg>
        <div class="overview">
          <svg class="ar"><use href="#sb-l"/></svg>
          <svg class="ov" role="img" aria-label="Overview">
            <path d="M.5 0v17" stroke="red"/><path d="M81.500 3v14M163.500 3v14M245.500 3v14M327.500 3v14M409.500 3v14M491.500 3v14M573.500 13v4" stroke="#fff"/>
            <path d="M17 15.500H655" stroke="#fff" stroke-dasharray="1 15.400"/>
            <g fill="#fff"><text x="1" y="13">0</text><text x="83" y="13">1,000,000</text><text x="165" y="13">2,000,000</text><text x="247" y="13">3,000,000</text><text x="329" y="13">4,000,000</text><text x="411" y="13">5,000,000</text><text x="493" y="13">6,000,000</text></g>
            <svg x="100%" overflow="visible"><text x="-3" y="13" text-anchor="end" fill="#fff">8,000,000ps</text></svg>
            <path d="M15 1h20v10l-3 3H17l-2-3z" fill="#ddd" stroke="#fff"/><path d="M9 16.500h10v-2l-4-4h-2l-4 4zM31 16.500h10v-2l-4-4h-2l-4 4z" fill="#e8e8e8" stroke="#666"/>
          </svg>
          <svg class="ar"><use href="#sb-r"/></svg>
        </div>
      </div>
      <div class="vscroll"><svg viewBox="0 0 12 14"><path d="M6 1l5 12H1z" fill="#e8e8e8" stroke="#777"/></svg><i class="vthumb"></i><svg viewBox="0 0 12 14"><path d="M6 13L1 1h10z" fill="#e8e8e8" stroke="#777"/></svg></div>
    </main>
    <footer class="status"><svg><use href="#target"/></svg><svg><use href="#nodes"/></svg><svg><use href="#disk"/></svg><span class="gap"></span><output>0&nbsp; objects selected</output></footer>
  </div>
</section>

<section class="behind">
  <div class="split">
    <div class="card left"><hr><div class="show"><svg viewBox="0 0 38 32"><path d="M0 0h10v9h13V0l14 16-14 16V20H0z" fill="#9f9f9f"/></svg><label for="sc">Show contents:</label><span class="pick big"><select id="sc"><option>In the signal list area</option></select></span></div></div>
    <div class="card right">
      <div class="scrolls"><div class="hscroll thin a"><svg><use href="#sb-l"/></svg><i class="thumb"></i><svg><use href="#sb-r"/></svg></div><div class="hscroll thin b"><svg><use href="#sb-l"/></svg><i class="thumb"></i><svg><use href="#sb-r"/></svg></div><svg class="al"><use href="#align"/></svg></div>
      <div class="filter">
        <button aria-label="Inputs"><svg viewBox="0 0 20 16"><path d="M6 2h12v12H6z" fill="#7692cf" stroke="#405c99"/><path d="M1 6h5V3l6 5-6 5v-3H1z" fill="#ff2" stroke="#a70"/></svg></button><button aria-label="Outputs"><svg viewBox="0 0 20 16"><path d="M1 2h12v12H1z" fill="#7692cf" stroke="#405c99"/><path d="M8 6h5V3l6 5-6 5v-3H8z" fill="#ff2" stroke="#a70"/></svg></button><button aria-label="Inouts"><svg viewBox="0 0 20 16"><path d="M1 2h10v12H1z" fill="#7692cf" stroke="#405c99"/><path d="M5 8l4-5v3h5V3l5 5-5 5v-3H9v3z" fill="#ff2" stroke="#a70"/></svg></button><button aria-label="Internals"><svg viewBox="0 0 20 16"><path d="M2 5h2v5H2zM16 5h2v5h-2z" fill="#ff2"/><path d="M4 2h12v12H4z" fill="#7692cf" stroke="#405c99"/><path d="M6 11h3V5h3v6h2" fill="none" stroke="#fff"/></svg></button><button aria-label="Variables"><svg viewBox="0 0 20 16"><path d="M3 2h14v12H3z" fill="#ff2" stroke="#a70"/><path d="M6 4h9v8H6z" fill="#ddd" stroke="#222" stroke-width="1.500"/><path d="M0 8h6M15 8h5M8 6h5M9 6v5M12 10V8" stroke="#222"/></svg></button><button aria-label="Assertions"><svg viewBox="0 0 20 16"><path d="M1 2h14v11H1z" fill="#ff2" stroke="#a70"/><path d="M3 10V6h3v4h3V6h3" fill="none" stroke="#222"/><circle cx="15" cy="8" r="4.500" fill="#7fa0e0" stroke="#27498a"/><path d="M15 5v4M15 10v1" stroke="#fff" stroke-width="1.500"/></svg></button><button aria-label="Analog"><svg viewBox="0 0 20 16"><path d="M1 5h2V2h3v3h3V2M1 9h3v-2h3v2M1 14h3v-3h3v3h3" fill="none" stroke="#189633" stroke-width="1.500"/><path d="M18 1l-7 9-1 4 3-2 6-8z" fill="#777" stroke="#222"/></svg></button>
        <label for="fl">Filter:</label><span class="combo wide"><input id="fl"><button aria-label="Filters"><b class="dn"></b></button></span>
        <svg class="pointer" viewBox="0 0 12 18"><path d="M1 1v14l3-3 3 5 2-1-2-5h4z" fill="#111" stroke="#bbb"/></svg>
      </div>
    </div>
  </div>
  <footer class="status"><svg><use href="#target"/></svg><svg><use href="#nodes"/></svg><svg><use href="#disk"/></svg><span class="gap"></span><output>1&nbsp; object selected</output></footer>
</section>

<footer class="taskbar">
  <button><svg><use href="#cabinet"/></svg>New - ...</button><button><svg><use href="#cabinet"/></svg>Withou...</button><button><svg><use href="#term"/></svg>root@v...</button><button><svg><use href="#firefox"/></svg>Syste...</button><button><svg class="dim"><use href="#cabinet"/></svg>[DSVD ...</button><button><svg><use href="#glass"/></svg>Design...</button><button><svg><use href="#term-g"/></svg>Consol...</button><button class="cur"><svg><use href="#waves"/></svg>Wavef...</button>
  <svg class="globe"><use href="#globe"/></svg>
  <div class="pager"><i></i><i></i></div>
  <svg class="trash" viewBox="0 0 18 22"><path d="M1 5h17v17H3z" fill="#5a9be6" stroke="#2b5fa5"/><path d="M0 5l3-3 3 1 2-3 4 3 4-2 2 5z" fill="#eee"/><path d="M5 9v10M10 9v10M15 9v10" stroke="#9cc5f2"/></svg>
</footer>
</body>
</html>
```
FILE: styles.css
```css
* { box-sizing: border-box; }
body { margin: 0; background: #2e2a29; color: #000; font: 12px/16px "Liberation Sans", Arial, sans-serif; overflow-x: hidden; }
a { color: inherit; text-decoration: none; }
button, input, select { font: inherit; color: inherit; margin: 0; padding: 0; border: 0; background: none; border-radius: 0; }
svg { display: block; flex: none; }
ul { list-style: none; margin: 0; padding: 0; }
.sprite { position: absolute; width: 0; height: 0; }
.i16 { width: 16px; height: 16px; }
.i22 { width: 22px; height: 22px; }
.i24 { width: 24px; height: 24px; }

/* desktop panel */
.panel { display: flex; justify-content: space-between; height: 26px; padding-bottom: 2px; border-bottom: 1px solid #eee; color: #eee; font: 14px/22px "DejaVu Sans Condensed", "DejaVu Sans", sans-serif; }
.panel-menu, .tray { display: flex; align-items: center; }
.panel-menu { gap: 17px; padding-left: 6px; }
.panel-menu .i24 { margin-right: -11px; }
.launch { margin: 0 -3px; }
.launch:nth-of-type(2) { margin-left: 0; }
.tray { gap: 7px; padding-right: 7px; }
.tray time { margin: 0 14px 0 25px; }

/* window frame */
.window { padding: 4px 6px 3px 5px; border: solid #eee; border-width: 0 2px 1px 0; }
.titlebar { display: flex; align-items: center; height: 22px; padding-bottom: 2px; }
.app { margin: 0 5px 0 1px; opacity: .6; }
.titlebar h1 { flex: 1; margin: 0; height: 20px; background: #b0d0ff; border: solid #fff; border-width: 1px 0 1px 1px; color: #fff; text-align: center; font: bold 13px/18px "DejaVu Sans", sans-serif; }
.wbtns { display: flex; gap: 4px; padding: 0 3px 0 8px; }
.wbtns button { width: 14px; height: 14px; background: #777; outline: 1px solid #ddd; }
.client { background: #e8e8e8; padding: 0 1px 2px 2px; border-top: 1px solid #fff; }
.menubar { display: flex; gap: 15px; height: 31px; align-items: center; padding: 0 2px 0 6px; border-bottom: 3px solid #c80000; }
.brand { margin-left: auto; font: bold 16px/16px "Open Sans", sans-serif; color: #222; }
.brand sup { font-size: 6px; line-height: 0; vertical-align: 7px; }
.macron { border-top: 2px solid #c80000; display: inline-block; line-height: 8px; height: 13px; }

/* toolbars */
.bar { display: flex; gap: 1px; height: 32px; }
.bar.low { height: 30px; }
.group { display: flex; align-items: center; min-width: 0; border: 1px solid; border-color: #fff #888 #888 #fff; padding-left: 2px; }
.group > * { flex: none; }
.grow { flex: 1; }
.grip { width: 3px; height: 24px; border: solid #888; border-width: 0 1px 0 0; border-left: 1px solid #fff; margin-right: 2px; }
.sep { width: 2px; height: 26px; border-left: 1px solid #777; border-right: 1px solid #fff; margin: 0 4px 0 3px; }
.bars button { display: flex; align-items: center; justify-content: center; min-width: 24px; height: 26px; }
.bars button svg { width: 22px; height: 22px; }
.bars .mr { margin-right: 4px; }
.off svg { -webkit-mask: repeating-conic-gradient(#000 0 25%, transparent 0 50%) 0 0/2px 2px; mask: repeating-conic-gradient(#000 0 25%, transparent 0 50%) 0 0/2px 2px; }
.off.dense svg { -webkit-mask: none; mask: none; opacity: .75; }
.dn, .up { display: inline-block; width: 0; height: 0; border: 3px solid transparent; border-top: 4px solid #111; border-bottom: 0; }
.up { border-top: 0; border-bottom: 4px solid #111; }
.bars .pressed { border: 1px solid; border-color: #888 #fff #fff #888; }
.bars .pressed.sq svg { width: 24px; height: 24px; }
.g1 { width: 396px; }
.g1 .pressed svg { width: 18px; height: 20px; }
.g2 { width: 66px; gap: 4px; }
.g3 { width: 187px; }
.bars .s16 { width: 16px; height: 16px; margin: 0 3px 0 4px; }
.g4 { flex: 1; }
.bars .tools { min-width: 32px; }
.bars .tools svg { width: 24px; height: 24px; }
.g4 .tools { margin: 0 3px; }
.send { font-size: 10px; line-height: 12px; margin: -9px 4px 0 9px; white-space: nowrap; }
.spread { display: flex; justify-content: space-between; }
.group .spread { flex: 1; padding-right: 4px; }
.bars label { margin: 0 5px 0 4px; white-space: nowrap; }
.pick { position: relative; display: inline-flex; background: #ececec; border: 1px solid #999; height: 20px; }
.pick select { appearance: none; padding: 0 13px 0 4px; outline: 0; }
.pick::after { content: ""; position: absolute; right: 3px; top: 7px; border: 4px solid transparent; border-top: 5px solid #111; border-bottom: 0; pointer-events: none; }
.combo { display: inline-flex; height: 20px; background: #fff; border: 2px solid; border-color: #888 #eee #eee #888; margin: 0 6px 0 4px; }
.combo input { flex: 1; min-width: 0; width: 0; outline: 0; padding-left: 1px; }
.bars .combo button, .combo button { display: flex; align-items: center; justify-content: center; width: 14px; min-width: 14px; height: 15px; background: #d0d0d0; border: 1px solid; border-color: #eee #777 #777 #eee; }
.w68 { width: 70px; margin-right: 5px; }
.w90 { width: 90px; margin: 0; }
.w104 { width: 105px; }
.w126 { width: 126px; margin: 0 4px 0 0; }
.h1 { width: 308px; }
.h1 > button + button { margin-left: 4px; }
.low > .grow > button { margin-right: 4px; }
.yellow { width: 350px; background: #efe966; border-color: #fbf7b0 #8a8630 #8a8630 #fbf7b0; }
.yellow .i24 { margin-left: -1px; }
.yellow .pick { background: #efe966; }
.yellow .combo + .pick { background: #e8e8e8; }
.yellow .grip { margin-right: 1px; }
.yellow select { padding-left: 3px; }
.eq { margin: 0 4px; }
.yellow .sep { margin: 0 6px 0 3px; }
.pale { display: flex; background: #ececec; height: 26px; padding: 0 1px; }
.pale button { min-width: 26px; }
.pale + .pale { margin-left: 2px; padding: 0; }
.r2 { width: 352px; }
.r2 > button { min-width: 25px; }
.r2 > .sep { margin: 0 4px 0 0; }
.r2 > .grip { margin-right: 4px; }
.clock { width: 30px; height: 24px; }
.small { font-size: 10px; margin-left: 3px; white-space: nowrap; }
.lk { margin: 0 3px 0 4px; }
.mini { display: grid; grid-template-columns: repeat(4, 17px); margin-left: 2px; }
.bars .mini button { min-width: 0; height: 14px; font: bold 15px/13px "Liberation Sans", sans-serif; }
.bars .mini svg { width: 12px; height: 12px; }
.g6 { width: 178px; }

/* workspace */
.work { display: flex; margin-top: 2px; border-bottom: 1px solid #888; }
.side { width: 33px; background: #a0a0a0; display: flex; flex-direction: column; }
.side-top { height: 19px; background: #7d7d7d; }
.side-top svg { width: 30px; height: 18px; }
.tabs { width: 31px; flex: 1; display: flex; flex-direction: column; align-items: flex-start; margin: 4px 0 3px; background: linear-gradient(90deg, #e8e8e8 0 4px, #000 4px 5px, transparent 5px); padding-top: 9px; gap: 3px; }
.tabs button { width: 24px; height: 27px; margin-left: 5px; background: #e8e8e8; border: solid #111; border-width: 1px 2px 2px 0; border-radius: 0 5px 0 0; box-shadow: inset 1px 1px #fff; }
.tabs button svg { width: 20px; height: 20px; margin: 0 1px; }
.tabs .on { width: 31px; height: 34px; margin: 0 0 -2px; border-width: 0 2px 2px 0; }
.tabs .on svg { margin-left: 6px; }
.lists { margin: 0 6px 0 4px; }
.info { display: grid; grid-template-columns: 16px 74px auto 1fr; align-items: center; align-content: start; grid-auto-rows: 15px; height: 49px; padding-top: 9px; font-size: 10px; }
.ib { width: 14px; height: 14px; border: 1px solid; border-color: #fff #888 #888 #fff; }
.ib svg { width: 12px; height: 12px; }
.rt { text-align: right; padding-right: 1px; white-space: nowrap; }
.info .dn { border-width: 5px 4px 0; margin-right: 1px; }
.cols { display: flex; gap: 6px; }
.names { width: 175px; }
.values { width: 75px; }
.head { display: flex; align-items: center; gap: 2px; height: 20px; padding: 0 3px 0 2px; background: #b1b1b1; border: 1px solid #ccc; border-bottom-color: #777; border-right-color: #888; }
.head span { flex: 1; }
.head svg { width: 10px; height: 10px; }
.head .dn { border-width: 5px 4px 0; }
.col li { display: flex; align-items: center; height: 20px; padding-top: 2px; background: #000; color: #fff; }
.col .tall { height: 60px; background: #333; }
.col .gr { background: #333; }
.col .last { height: 45px; background: #333; padding-top: 18px; }
.names ul { position: relative; }
.names ul::before { content: ""; position: absolute; z-index: 1; left: 9px; top: 11px; bottom: 14px; border-left: 1px dotted #ccc; }
.names li { font-size: 11px; padding-left: 10px; }
.stem { width: 15px; border-top: 1px dotted #ccc; }
.names li svg { width: 16px; height: 14px; margin-right: 5px; }
.ex button { position: relative; z-index: 2; width: 9px; height: 9px; margin-left: -5px; border: 1px solid #fff; background: linear-gradient(#fff, #fff) center/5px 1px no-repeat, linear-gradient(#fff, #fff) center/1px 5px no-repeat, #000; }
.names .ex .stem { width: 9px; }
.names .ex svg { width: 20px; margin: 0 4px 0 -1px; }
.ins { position: relative; border-top: 1px solid #ccc; margin-top: 1px; }
.ins::before { content: ""; position: absolute; left: 13px; top: 0; border: 4px solid transparent; border-top-color: #ccc; border-bottom: 0; }
.names .ins { height: 19px; padding-top: 0; }
.values li { font: 10px/12px "DejaVu Sans Mono", monospace; padding: 0 2px; }
.col.values .last { padding-top: 15px; }
.values li svg { width: 14px; height: 10px; margin: 0 3px 0 auto; }
.more { border: 4px solid transparent; border-left: 4px solid #fff; border-right: 0; margin-left: 1px; }
.cy { color: #00e5ff; }
.bl { color: #0030ff; }
.rd { color: red; }
.hscroll { display: flex; align-items: center; flex: 1; height: 18px; background: #c4c4c4; border: 1px solid; border-color: #888 #fff #fff #888; }
.hscroll svg { width: 16px; height: 15px; }
.thumb { flex: 1; height: 16px; margin: 0 1px; background: #e8e8e8; border: 1px solid; border-color: #fff #777 #777 #fff; }
.nub { flex: none; width: 10px; }
.void { flex: 1; }
.hrow { display: flex; align-items: center; }
.al { width: 11px; height: 12px; margin: 0 3px; }
.names .hscroll, .hrow { margin-top: 1px; margin-bottom: 1px; }

/* waveform canvas */
.waves { flex: 1; min-width: 0; display: flex; flex-direction: column; }
.plot { width: 100%; height: 394px; background: #000; overflow: hidden; }
.green { fill: none; stroke: #0f0; }
.rule { font: 12px "Liberation Sans", sans-serif; }
.bits { font: 10px "DejaVu Sans Mono", monospace; }
.overview { display: flex; height: 19px; padding-top: 1px; border-top: 1px solid #888; background: #c4c4c4; }
.ov { flex: 1; min-width: 0; height: 17px; background: #000; font-size: 11px; }
.ar { width: 18px; height: 16px; margin: 0 1px; }
.vscroll { display: flex; flex-direction: column; width: 12px; margin: 69px 0 20px 1px; background: #c4c4c4; border: 1px solid; border-color: #888 #fff #fff #888; }
.vscroll svg { width: 10px; height: 13px; }
.vthumb { flex: 1; margin-bottom: 16px; background: #e8e8e8; border: 1px solid; border-color: #fff #777 #777 #fff; }

.status { display: flex; align-items: stretch; height: 25px; margin-top: 3px; border: 1px solid; border-color: #888 #fff #888 #888; background: #e8e8e8; }
.status svg { width: 21px; height: 22px; padding: 1px; border-right: 1px solid #888; }
.gap { flex: 1; }
.status output { border-left: 1px solid #888; padding: 2px 6px 2px 4px; }

/* window underneath */
.behind { background: #e8e8e8; margin: 0 4px 0 5px; padding-bottom: 1px; }
.behind .status output { padding-right: 4px; }
.split { display: flex; background: #a0a0a0; border-bottom: 1px solid #888; height: 50px; box-shadow: inset 0 -3px #e8e8e8; }
.card { background: #e8e8e8; height: 47px; border: solid #000; border-width: 0 2px 2px 0; border-radius: 0 0 5px 5px; }
.left { width: 319px; padding: 6px 6px 0 10px; }
.left hr { margin: 0; border: 0; height: 2px; background: #a0a0a0; }
.show { display: flex; align-items: flex-start; padding-left: 10px; }
.show svg { width: 38px; height: 30px; margin-right: 9px; }
.show label { margin: 8px 5px 0 0; white-space: nowrap; }
.big { margin-top: 5px; height: 22px; }
.big select { padding-left: 3px; padding-right: 14px; }
.big::after { right: 2px; top: 8px; border-width: 5px 3px 0; }
.right { flex: 1; margin-left: 28px; padding: 0 8px 0 15px; }
.scrolls { display: flex; gap: 2px; align-items: center; }
.hscroll.thin { height: 13px; }
.thin svg { width: 12px; height: 12px; }
.thin .thumb { height: 11px; }
.thin.a { flex: 373; }
.thin.b { flex: 235; }
.scrolls .al { margin: 0 15px 0 4px; }
.filter { position: relative; display: flex; align-items: center; gap: 4px; margin-top: 5px; padding-left: 1px; }
.filter > button { width: 24px; height: 21px; border: 1px solid; border-color: #888 #fff #fff #888; }
.filter > button svg { width: 20px; height: 16px; margin: 1px; }
.filter label { margin-left: 2px; }
.combo.wide { flex: 1; height: 21px; margin: 0 2px 0 0; }
.pointer { position: absolute; left: 287px; top: 4px; width: 12px; height: 18px; }

.taskbar { display: flex; align-items: center; gap: 4px; height: 26px; margin-top: 4px; padding-left: 13px; color: #ddd; font: 13px/20px "DejaVu Sans Condensed", "DejaVu Sans", sans-serif; overflow: hidden; }
.taskbar button { display: flex; align-items: center; gap: 7px; width: 96px; height: 22px; padding-left: 5px; border: 1px solid #1d1a19; border-radius: 3px; background: #353130; white-space: nowrap; }
.taskbar button svg { width: 16px; height: 16px; }
.taskbar .cur { background: #211e1d; }
.dim { opacity: .5; }
.globe { width: 20px; height: 20px; margin-left: 9px; }
.pager { display: flex; margin-left: auto; }
.pager i { width: 26px; height: 20px; background: #fff; border-bottom: 1px solid #b0d0ff; }
.pager i + i { background: #1d1a19; border: 0; }
.trash { width: 18px; height: 22px; margin-left: 10px; margin-right: 4px; }
```
